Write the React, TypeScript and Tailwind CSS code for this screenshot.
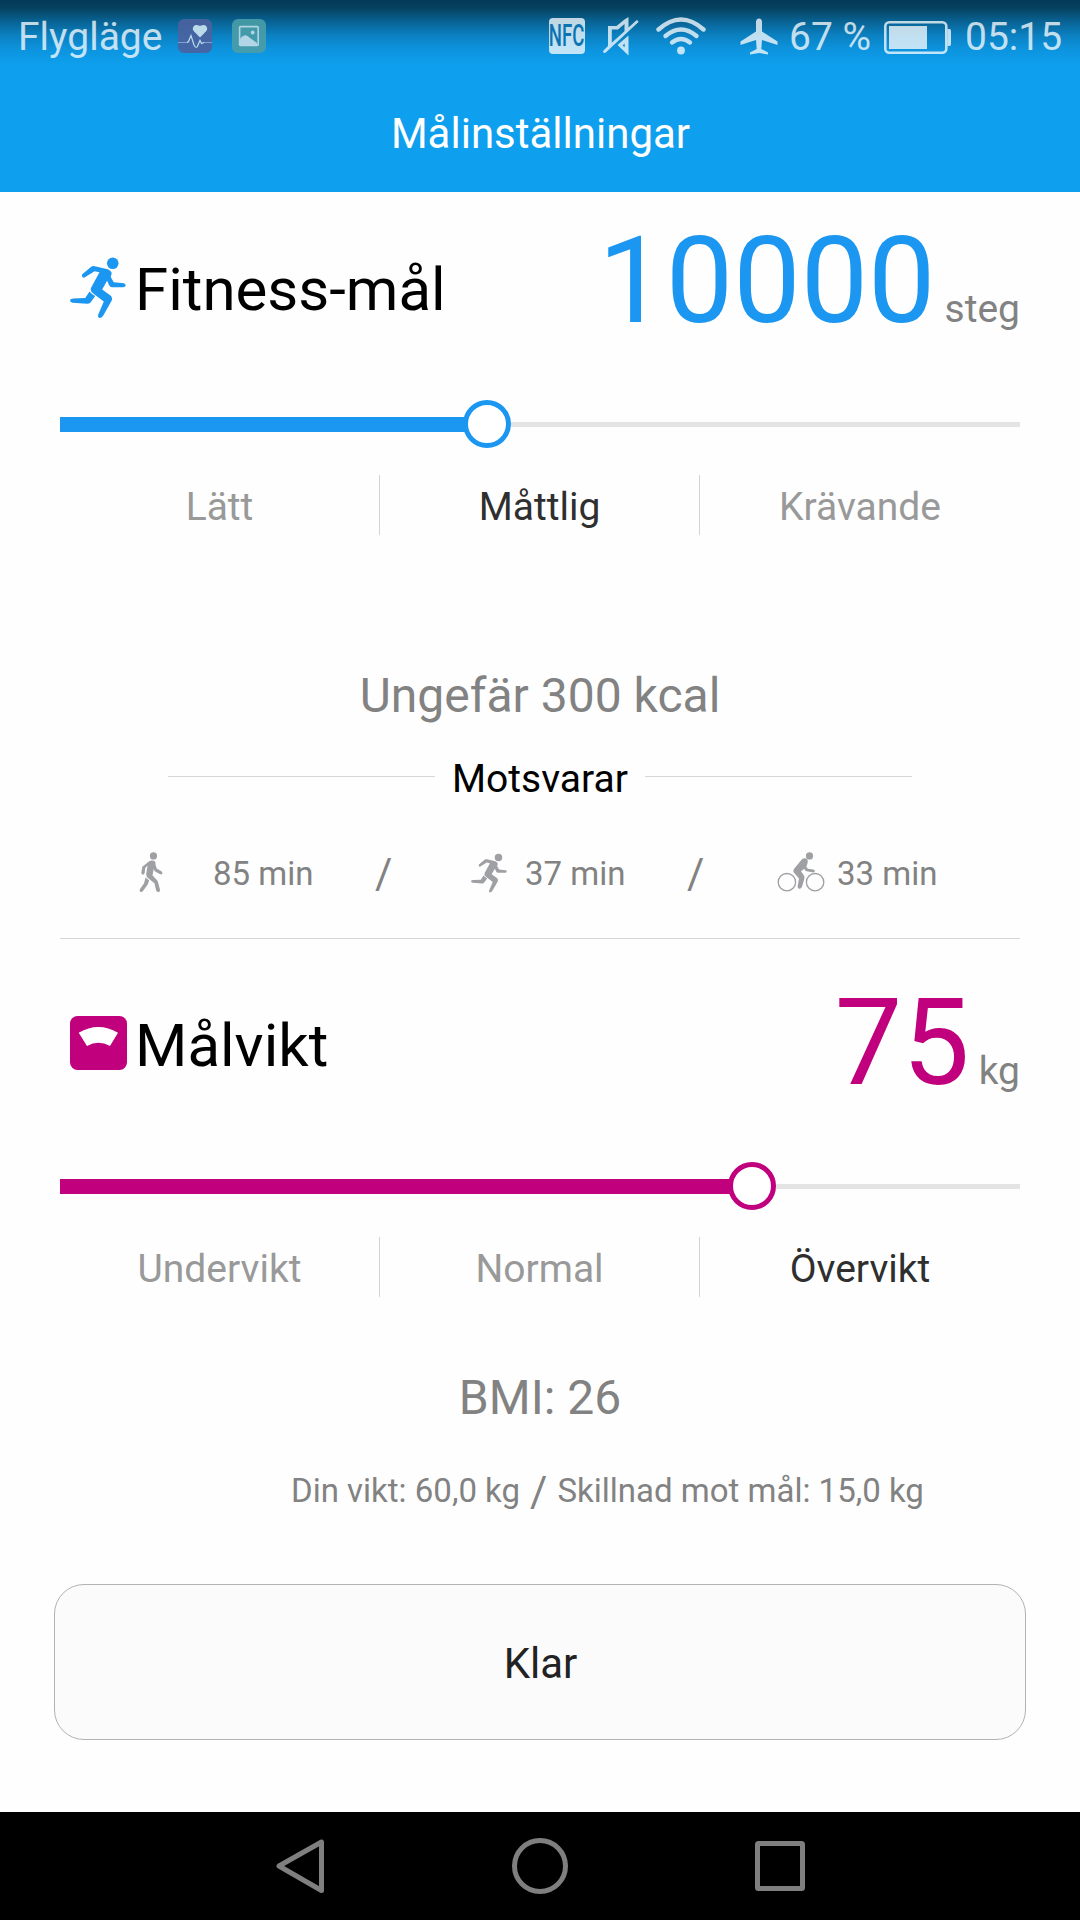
import type { ReactNode } from "react";
import clsx from "clsx";

function HeartRateAppIcon() {
  return (
    <svg width="34" height="34" viewBox="0 0 34 34" className="opacity-90">
      <rect width="34" height="34" rx="6" fill="#4c62a0" />
      <path
        d="M22 18.500 L15.600 12 Q14 9.500 15.600 7.200 Q18 4.800 22 7 Q26 4.800 28.400 7.200 Q30 9.500 28.400 12 Z"
        fill="#cfe6f1"
      />
      <path d="M0 23.500 H10 M25 23.500 H34" stroke="#8fa5d0" strokeWidth="1.200" />
      <path
        d="M9 23.500 L10.500 22.500 L13 16.500 L16 26 Q18.500 31 20 26 L22 21.500 L23.500 24.500 L26 23.500"
        fill="none"
        stroke="#cfe6f1"
        strokeWidth="1.200"
      />
    </svg>
  );
}

function GalleryAppIcon() {
  return (
    <svg width="34" height="34" viewBox="0 0 34 34" className="opacity-90">
      <rect width="34" height="34" rx="6" fill="#4a9ea8" />
      <rect x="7.600" y="7.600" width="18.600" height="18.800" rx="1" fill="none" stroke="#c4dfea" strokeWidth="1.600" />
      <circle cx="20.700" cy="13.500" r="1.900" fill="#c4dfea" />
      <path d="M8 20 Q13 13 18 19 L25 24 V26.500 H8 Z" fill="#c4dfea" />
    </svg>
  );
}

function MuteIcon() {
  return (
    <svg width="38" height="40" viewBox="0 0 38 40" className="text-white/75">
      <path
        fill="currentColor"
        d="M6 10 H14.500 L22.500 3.500 L26.500 1 V11.500 L34.500 4.200 Q36.500 4 36.500 6 L3.500 36.800 Q1 37.500 1 35 L6 30 Z M9.800 13.500 V26.800 L22.500 15.200 V8 L16 13.500 Z"
        fillRule="evenodd"
      />
      <path fill="currentColor" d="M15.500 29 L26.500 19.500 V39.500 Z M20.500 29.500 L22.700 31.300 V27.500 Z" fillRule="evenodd" />
    </svg>
  );
}

function WifiIcon() {
  return (
    <svg width="50" height="38" viewBox="0 0 50 38" fill="none" stroke="currentColor" strokeWidth="4.400" strokeLinecap="round" className="text-white/75">
      <path d="M2.500 12.500 Q25 -7.500 47.500 12.500" />
      <path d="M9.500 19 Q25 6 40.500 19" />
      <path d="M16 25.500 Q25 18.500 34 25.500" />
      <circle cx="25" cy="33.500" r="3.900" fill="currentColor" stroke="none" />
    </svg>
  );
}

function PlaneIcon() {
  return (
    <svg width="38" height="37" viewBox="0 0 38 37" className="text-white/75">
      <path
        fill="currentColor"
        d="M16 3.500 Q16.500 0.500 19 0.500 Q21.500 0.500 22 3.500 V13.500 L37.500 23.500 V27 L22 22 L21.300 31 L28 34.500 V36.500 L19 35 L10 36.500 V34.500 L16.700 31 L16 22 L0.500 27 V23.500 L16 13.500 Z"
      />
    </svg>
  );
}

function BatteryIcon() {
  return (
    <svg width="67" height="33" viewBox="0 0 67 33" className="text-white/75">
      <rect x="1.300" y="1.300" width="61" height="30.400" rx="4" fill="none" stroke="currentColor" strokeWidth="2.600" />
      <rect x="5" y="5" width="38" height="23" fill="currentColor" />
      <path d="M63.500 8 H65.500 Q67 8 67 10 V23 Q67 25 65.500 25 H63.500 Z" fill="currentColor" />
    </svg>
  );
}

function RunnerIcon({ className }: { className?: string }) {
  return (
    <svg viewBox="90 110 169 184" className={className} fill="currentColor">
      <circle cx="219" cy="129" r="17.500" />
      <path d="M127 162 L155 139 Q159 136 165 138 L204 147 Q213 150 216 158 L213 170 L222 186 L253 189 Q258 191 258 196 Q257 201 250 201 L217 201 Q211 201 208 195 L202 182 L187 208 L212 226 Q219 232 216 241 L190 287 Q186 294 178 294 Q173 291 175 284 L192 244 L160 220 Q149 212 154 202 L179 156 L164 153 L134 172 Q126 174 126 166 Z" />
      <path d="M149 214 Q155 222 166 228 L152 247 Q148 251 142 251 L97 248 Q90 246 90 240 Q92 235 100 235 L136 234 Z" />
    </svg>
  );
}

function WalkerIcon({ className }: { className?: string }) {
  return (
    <svg viewBox="117 334 71 122" className={className} fill="currentColor">
      <circle cx="160" cy="346" r="11" />
      <path d="M146 363 Q155 357 164 362 Q167 366 166 371 L170 384 L184 393 Q188 396 187 400 Q184 404 179 401 L164 393 L161 386 L157 405 L171 420 Q174 424 175 430 L180 449 Q181 455 175 456 Q170 457 168 451 L163 429 L143 413 Q137 408 138 400 L142 375 L135 383 L133 399 Q131 404 127 403 Q123 402 123 397 L126 379 Z" />
      <path d="M136 412 L147 421 L142 434 L128 453 Q125 457 120 455 Q116 452 119 447 L131 430 Z" />
    </svg>
  );
}

function CyclistIcon({ className }: { className?: string }) {
  return (
    <svg viewBox="711 335 144 122" className={className} fill="currentColor">
      <circle cx="809" cy="347" r="11" />
      <g fill="none" stroke="currentColor" strokeWidth="4">
        <circle cx="740" cy="427" r="26.500" />
        <circle cx="826" cy="427" r="26.500" />
      </g>
      <path d="M786 357 Q795 351 802 357 Q805 362 803 369 L799 380 L804 386 L821 388 Q827 391 825 395 Q822 398 817 397 L800 394 Q795 392 793 386 L783 394 L791 405 Q795 410 793 417 L786 441 Q783 448 777 447 Q772 445 773 438 L777 416 L763 400 Q757 394 762 386 Z" />
    </svg>
  );
}

function ScaleIcon() {
  return (
    <svg width="57" height="54" viewBox="0 0 57 54" className="mb-1.5">
      <rect width="57" height="54" rx="7.500" fill="#c0007c" />
      <path d="M8.700 16.700 Q28.500 5.300 48 16.700 L40 30 Q28.500 23.300 17 30 Z" fill="#fff" />
    </svg>
  );
}

function StatusBar() {
  return (
    <div className="flex h-[72px] items-center pl-[18px] text-[39px] leading-[72px] text-white/75">
      <span className="w-[160px] pt-0.5">Flygläge</span>
      <HeartRateAppIcon />
      <div className="w-5" />
      <GalleryAppIcon />
      <div className="ml-[283px] flex h-9 w-9 items-center justify-center rounded bg-white/75">
        <span className="scale-x-[0.6] text-[31px] leading-9 font-medium text-[#0b74b0]">NFC</span>
      </div>
      <div className="ml-[17px]"><MuteIcon /></div>
      <div className="ml-4"><WifiIcon /></div>
      <div className="ml-[34px]"><PlaneIcon /></div>
      <span className="ml-[11px] w-[95px] pt-0.5 whitespace-nowrap">67 %</span>
      <div className="pt-[3px]"><BatteryIcon /></div>
      <span className="ml-[14px] pt-0.5">05:15</span>
    </div>
  );
}

type GoalProps = {
  icon: ReactNode;
  title: string;
  value: string;
  unit: string;
  // px along the 960px track
  position: number;
  levels: string[];
  active: number;
  fill: string;
  ring: string;
  text: string;
  titleOffset: string;
};

function Goal({ icon, title, value, unit, position, levels, active, fill, ring, text, titleOffset }: GoalProps) {
  return (
    <section>
      <div className="flex h-[208px] justify-between">
        <div className={clsx("flex h-[60px] items-center pl-2.5", titleOffset)}>
          <div className="w-[65px]">{icon}</div>
          <h2 className="text-[60px] leading-[60px] text-black">{title}</h2>
        </div>
        <div className="mt-[29px] flex items-baseline">
          <span className={clsx("text-[120px] leading-[120px]", text)}>{value}</span>
          <span className="ml-[9px] text-[39px] leading-[40px] text-[#828282]">{unit}</span>
        </div>
      </div>

      <div className="flex h-12 items-center">
        <div className={clsx("mt-px h-[15px]", fill)} style={{ width: position - 20 }} />
        <div className={clsx("-ml-1 h-12 w-12 shrink-0 rounded-full border-[5px] bg-white", ring)} />
        <div className="mt-px h-[5px] flex-1 bg-[#e4e4e4]" />
      </div>

      <div className="mt-[27px] grid h-[60px] grid-cols-3 divide-x divide-[#d4d4d4] text-[39px] leading-10">
        {levels.map((level, i) => (
          <div
            key={level}
            className={clsx("flex items-center justify-center pt-[3px]", i === active ? "text-[#2f2f2f]" : "text-[#999999]")}
          >
            {level}
          </div>
        ))}
      </div>
    </section>
  );
}

export default function App() {
  return (
    <div className="flex h-[1920px] w-[1080px] flex-col overflow-hidden bg-[#fefefe] font-[Roboto,sans-serif]">
      <header className="h-[192px] bg-[linear-gradient(to_bottom,#04395a_0px,#06425f_8px,#085f8e_20px,#0b80c0_35px,#0d94df_50px,#0ea0ee_66px)]">
        <StatusBar />
        <h1 className="pt-[2px] pl-px text-center text-[42px] leading-[120px] text-white">Målinställningar</h1>
      </header>

      <main className="flex-1 px-[60px]">
        <Goal
          icon={<RunnerIcon className="mb-1.5 h-[61px] w-14 text-[#1b96f1]" />}
          title="Fitness-mål"
          value="10000"
          unit="steg"
          position={427}
          levels={["Lätt", "Måttlig", "Krävande"]}
          active={1}
          fill="bg-[#1b96f1]"
          ring="border-[#1b96f1]"
          text="text-[#1b96f1]"
          titleOffset="mt-[68px]"
        />

        <p className="mt-[131px] mb-[33px] text-center text-[48px] leading-[60px] text-[#828282]">Ungefär 300 kcal</p>

        <div className="flex h-10 items-center px-[108px]">
          <div className="mb-[5px] h-px flex-1 bg-[#d6d6d6]" />
          <span className="mx-[17px] text-[39px] leading-10 text-black">Motsvarar</span>
          <div className="mb-[5px] h-px flex-1 bg-[#d6d6d6]" />
        </div>

        <div className="mt-[45px] flex h-[60px] items-center text-[33px] text-[#828282]">
          <WalkerIcon className="mb-1 ml-[79px] h-10 w-[24px] text-[#9fa0a4]" />
          <span className="ml-[50px] w-[162px]">85 min</span>
          <span className="mb-0.5 w-[96px] text-[42px]">/</span>
          <RunnerIcon className="mb-0.5 h-10 w-9 text-[#9fa0a4]" />
          <span className="ml-[18px] w-[162px]">37 min</span>
          <span className="mb-0.5 w-[90px] text-[42px]">/</span>
          <CyclistIcon className="mb-1 h-10 w-12 text-[#9fa0a4]" />
          <span className="ml-3">33 min</span>
        </div>

        <div className="mt-[34px] mb-[15px] h-px bg-[#d6d6d6]" />

        <Goal
          icon={<ScaleIcon />}
          title="Målvikt"
          value="75"
          unit="kg"
          position={692}
          levels={["Undervikt", "Normal", "Övervikt"]}
          active={2}
          fill="bg-[#c0007c]"
          ring="border-[#c0007c]"
          text="text-[#c0007c]"
          titleOffset="mt-[62px]"
        />

        <p className="mt-[71px] text-center text-[48px] leading-[60px] text-[#828282]">BMI: 26</p>

        <div className="mt-[43px] flex h-10 items-center pl-[231px] text-[33px] whitespace-nowrap text-[#828282]">
          <span>Din vikt: 60,0 kg</span>
          <span className="mx-[10px] text-[42px]">/</span>
          <span>Skillnad mot mål: 15,0 kg</span>
        </div>

        <button className="-mx-1.5 mt-[73px] flex h-[156px] w-[972px] items-center justify-center rounded-[30px] border border-[#b2b2b2] bg-[#fbfbfb] pt-0.5 pl-px text-[42px] text-[#222]">
          Klar
        </button>
      </main>

      <nav className="h-[108px] bg-black">
        <svg width="1080" height="108" viewBox="0 0 1080 108" fill="none" stroke="#7f7f7f" strokeWidth="5" strokeLinejoin="round">
          <path d="M321.500 30 V78.500 L279 54 Z" />
          <circle cx="540" cy="54" r="25.500" />
          <rect x="757.500" y="31.500" width="45" height="45" rx="1" />
        </svg>
      </nav>
    </div>
  );
}
